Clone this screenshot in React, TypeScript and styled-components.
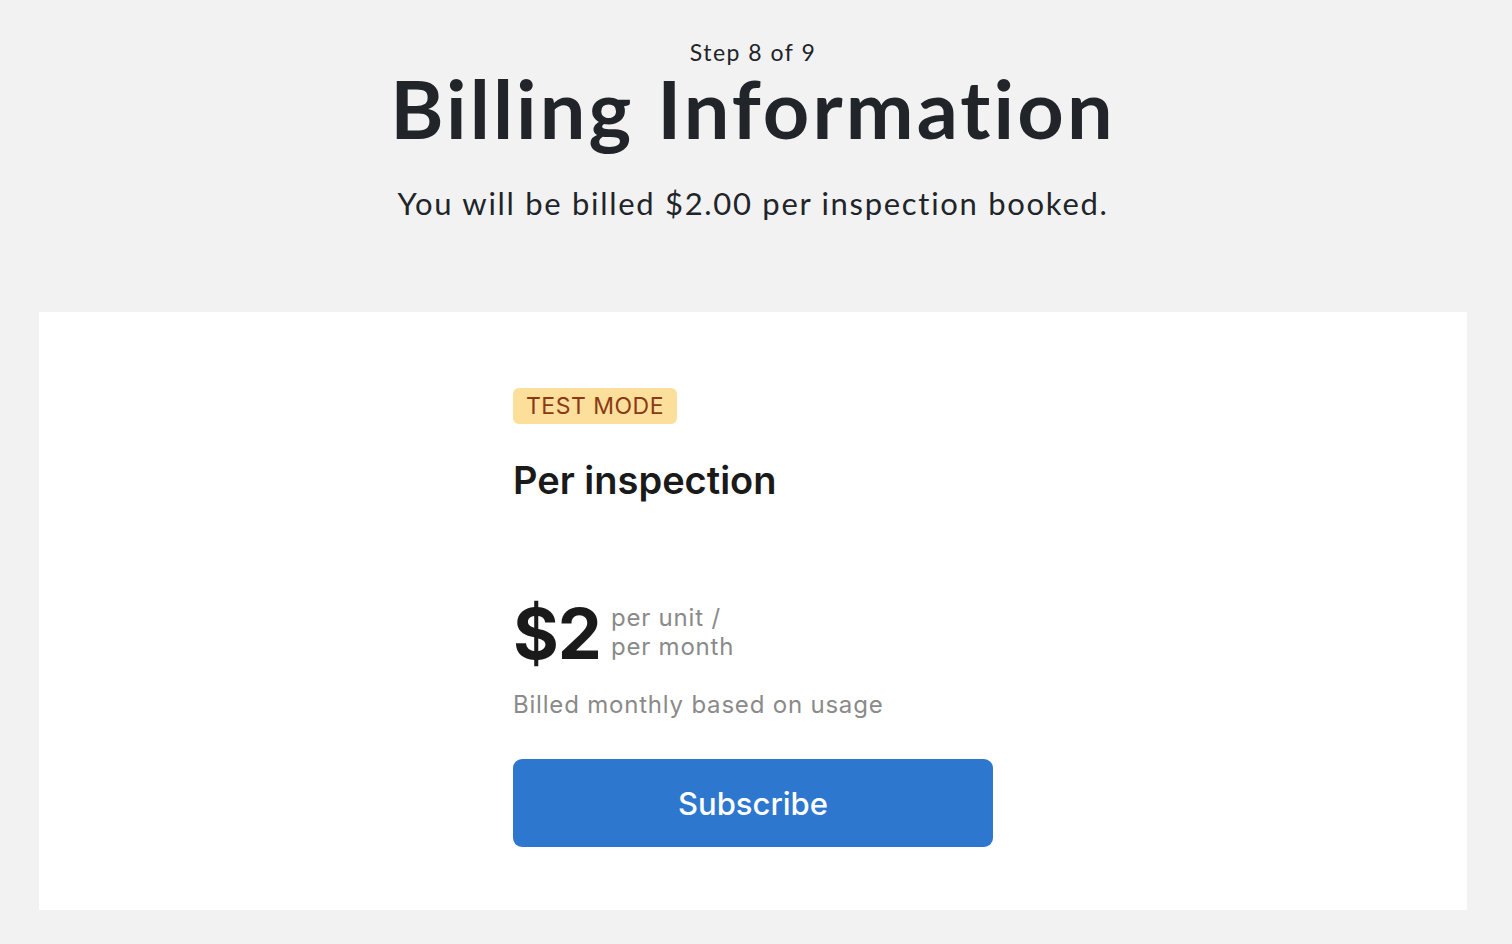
import React from "react";
import styled, { createGlobalStyle } from "styled-components";

const Global = createGlobalStyle`
  html, body { margin: 0; padding: 0; background: #f2f2f2; }
  body { font-family: Lato, "Open Sans", sans-serif; }
  * { box-sizing: border-box; }
`;

const Page = styled.div`
  min-height: 944px;
  background: #f2f2f2;
  display: flex;
  flex-direction: column;
  align-items: center;
  padding: 42px 6px 0 0;
`;

const Header = styled.header`
  display: flex;
  flex-direction: column;
  align-items: center;
  color: #212429;
  font-family: Lato, sans-serif;
`;

const Step = styled.div`
  font-size: 23px;
  line-height: 20px;
  letter-spacing: 1.5px;
`;

const Title = styled.h1`
  margin: 0;
  font-size: 81px;
  font-weight: 700;
  line-height: 91px;
  letter-spacing: 3.1px;
`;

const Subtitle = styled.p`
  margin: 30px 0 0;
  font-size: 31px;
  line-height: 40px;
  letter-spacing: 1.7px;
`;

const Card = styled.section`
  margin-top: 89px;
  width: 1428px;
  background: #ffffff;
  display: flex;
  justify-content: center;
  padding: 76px 0 63px;
`;

const Content = styled.div`
  width: 480px;
  display: flex;
  flex-direction: column;
  align-items: flex-start;
  font-family: Inter, "Noto Sans", sans-serif;
`;

const Badge = styled.span`
  background: #fbdf9b;
  color: #8b3a17;
  font-size: 23px;
  line-height: 36px;
  padding: 0 13px;
  border-radius: 6px;
  letter-spacing: 0.5px;
`;

const Plan = styled.h2`
  margin: 33px 0 0;
  font-size: 38px;
  font-weight: 600;
  line-height: 46px;
  color: #1a1a1a;
  letter-spacing: 0;
`;

const PriceRow = styled.div`
  margin-top: 93px;
  display: flex;
  align-items: center;
  gap: 10px;
`;

const Amount = styled.span`
  font-size: 70px;
  font-weight: 700;
  line-height: 76px;
  color: #1a1a1a;
  letter-spacing: -1px;
`;

const Unit = styled.span`
  font-size: 24px;
  line-height: 29px;
  color: #8a8a8a;
  letter-spacing: 0.8px;
  padding-bottom: 4px;
`;

const Note = styled.div`
  margin-top: 17px;
  font-size: 24px;
  line-height: 32px;
  color: #8a8a8a;
  letter-spacing: 0.8px;
`;

const Button = styled.button`
  margin-top: 38px;
  width: 480px;
  height: 88px;
  border: none;
  border-radius: 9px;
  background: #2e77cf;
  color: #ffffff;
  font-family: Inter, sans-serif;
  font-size: 31px;
  font-weight: 500;
  cursor: pointer;
`;

export default function App() {
  return (
    <>
      <Global />
      <Page>
        <Header>
          <Step>Step 8 of 9</Step>
          <Title>Billing Information</Title>
          <Subtitle>You will be billed $2.00 per inspection booked.</Subtitle>
        </Header>
        <Card>
          <Content>
            <Badge>TEST MODE</Badge>
            <Plan>Per inspection</Plan>
            <PriceRow>
              <Amount>$2</Amount>
              <Unit>
                per unit /
                <br />
                per month
              </Unit>
            </PriceRow>
            <Note>Billed monthly based on usage</Note>
            <Button>Subscribe</Button>
          </Content>
        </Card>
      </Page>
    </>
  );
}
